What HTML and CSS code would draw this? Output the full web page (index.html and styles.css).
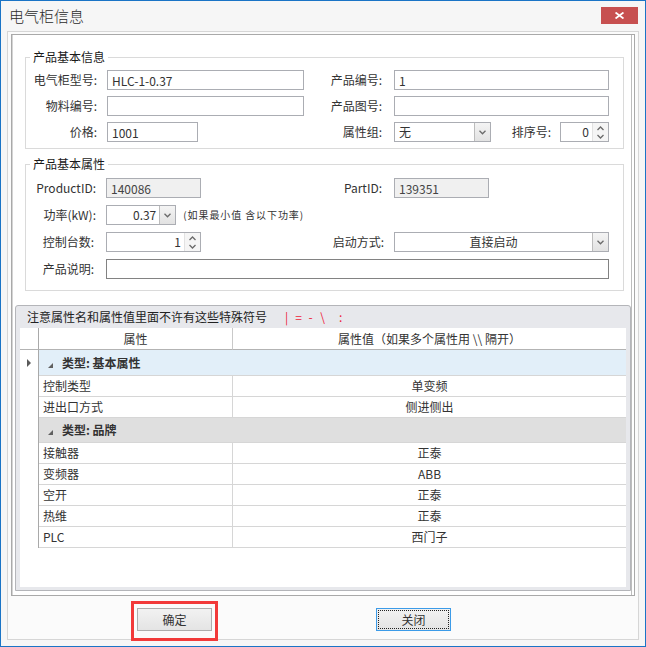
FILE: index.html
```html
<!DOCTYPE html>
<html lang="zh-CN">
<head>
    <meta charset="UTF-8">
    <title>电气柜信息</title>
    <link rel="stylesheet" href="styles.css">
</head>
<body>
    <div class="window">
        <div class="titlebar">
            <span class="title">电气柜信息</span>
            <button class="close" type="button" aria-label="关闭">
                <svg width="9" height="7" viewBox="0 0 9 7"><path d="M0.5 0.5 L8.5 6.5 M8.5 0.5 L0.5 6.5" stroke="#fff" stroke-width="1.8" fill="none"/></svg>
            </button>
        </div>

        <div class="frame">
            <div class="panel">
                <fieldset class="group">
                    <legend>产品基本信息</legend>
                    <div class="form-grid">
                        <label>电气柜型号:</label>
                        <input class="field" type="text" value="HLC-1-0.37">
                        <label>产品编号:</label>
                        <input class="field" type="text" value="1">

                        <label>物料编号:</label>
                        <input class="field" type="text">
                        <label>产品图号:</label>
                        <input class="field" type="text">

                        <label>价格:</label>
                        <input class="field price" type="text" value="1001">
                        <label>属性组:</label>
                        <div class="pair">
                            <div class="combo group-combo">
                                <span class="combo-text">无</span>
                                <span class="drop"><svg width="7" height="5" viewBox="0 0 7 5"><path d="M0.5 0.8 L3.5 3.8 L6.5 0.8" stroke="#6a6a6a" stroke-width="1.3" fill="none"/></svg></span>
                            </div>
                            <label class="inline">排序号:</label>
                            <div class="spin sort-spin">
                                <span class="spin-text">0</span>
                                <span class="spin-btns">
                                    <svg width="7" height="5" viewBox="0 0 7 5"><path d="M0.5 4 L3.5 1 L6.5 4" stroke="#6a6a6a" stroke-width="1.3" fill="none"/></svg>
                                    <svg width="7" height="5" viewBox="0 0 7 5"><path d="M0.5 1 L3.5 4 L6.5 1" stroke="#6a6a6a" stroke-width="1.3" fill="none"/></svg>
                                </span>
                            </div>
                        </div>
                    </div>
                </fieldset>

                <fieldset class="group attrs">
                    <legend>产品基本属性</legend>
                    <div class="form-grid attrs-grid">
                        <label>ProductID:</label>
                        <input class="field id-field" type="text" value="140086" readonly>
                        <label>PartID:</label>
                        <input class="field id-field" type="text" value="139351" readonly>

                        <label>功率(kW):</label>
                        <div class="power">
                            <div class="combo small-combo">
                                <span class="combo-text right">0.37</span>
                                <span class="drop"><svg width="7" height="5" viewBox="0 0 7 5"><path d="M0.5 0.8 L3.5 3.8 L6.5 0.8" stroke="#6a6a6a" stroke-width="1.3" fill="none"/></svg></span>
                            </div>
                            <span class="note">(如果最小值 含以下功率)</span>
                        </div>
                        <span></span>
                        <span></span>

                        <label>控制台数:</label>
                        <div class="spin small-combo">
                            <span class="spin-text">1</span>
                            <span class="spin-btns">
                                <svg width="7" height="5" viewBox="0 0 7 5"><path d="M0.5 4 L3.5 1 L6.5 4" stroke="#6a6a6a" stroke-width="1.3" fill="none"/></svg>
                                <svg width="7" height="5" viewBox="0 0 7 5"><path d="M0.5 1 L3.5 4 L6.5 1" stroke="#6a6a6a" stroke-width="1.3" fill="none"/></svg>
                            </span>
                        </div>
                        <label>启动方式:</label>
                        <div class="combo">
                            <span class="combo-text center">直接启动</span>
                            <span class="drop"><svg width="7" height="5" viewBox="0 0 7 5"><path d="M0.5 0.8 L3.5 3.8 L6.5 0.8" stroke="#6a6a6a" stroke-width="1.3" fill="none"/></svg></span>
                        </div>

                        <label>产品说明:</label>
                        <input class="field desc" type="text">
                    </div>
                </fieldset>

                <div class="grid-panel">
                    <div class="caption">
                        注意属性名和属性值里面不许有这些特殊符号
                        <span class="warn"><span>|</span><span>=</span><span>-</span><span>\</span><span class="colon">:</span></span>
                    </div>
                    <div class="grid-body">
                        <table class="prop-grid">
                            <thead>
                                <tr>
                                    <th class="ind"></th>
                                    <th class="name-col">属性</th>
                                    <th class="value-col">属性值（如果多个属性用 \\ 隔开）</th>
                                </tr>
                            </thead>
                            <tbody>
                                <tr class="cat cat-basic">
                                    <td class="ind"><svg width="4" height="8" viewBox="0 0 4 8"><path d="M0 0 L4 4 L0 8 Z" fill="#5a5a5a"/></svg></td>
                                    <td colspan="2"><svg class="fold" width="5" height="5" viewBox="0 0 5 5"><path d="M5 0 L5 5 L0 5 Z" fill="#606060"/></svg>类型: 基本属性</td>
                                </tr>
                                <tr>
                                    <td class="ind"></td>
                                    <td class="name">控制类型</td>
                                    <td class="value">单变频</td>
                                </tr>
                                <tr>
                                    <td class="ind"></td>
                                    <td class="name">进出口方式</td>
                                    <td class="value">侧进侧出</td>
                                </tr>
                                <tr class="cat cat-brand">
                                    <td class="ind"></td>
                                    <td colspan="2"><svg class="fold" width="5" height="5" viewBox="0 0 5 5"><path d="M5 0 L5 5 L0 5 Z" fill="#606060"/></svg>类型: 品牌</td>
                                </tr>
                                <tr>
                                    <td class="ind"></td>
                                    <td class="name">接触器</td>
                                    <td class="value">正泰</td>
                                </tr>
                                <tr>
                                    <td class="ind"></td>
                                    <td class="name">变频器</td>
                                    <td class="value">ABB</td>
                                </tr>
                                <tr>
                                    <td class="ind"></td>
                                    <td class="name">空开</td>
                                    <td class="value">正泰</td>
                                </tr>
                                <tr>
                                    <td class="ind"></td>
                                    <td class="name">热维</td>
                                    <td class="value">正泰</td>
                                </tr>
                                <tr>
                                    <td class="ind"></td>
                                    <td class="name">PLC</td>
                                    <td class="value">西门子</td>
                                </tr>
                            </tbody>
                        </table>
                    </div>
                </div>
            </div>

            <div class="actions">
                <span class="marked"><button class="btn" type="button">确定</button></span>
                <button class="btn focused" type="button"><span>关闭</span></button>
            </div>
        </div>
    </div>
</body>
</html>
```

FILE: styles.css
```css
* {
    box-sizing: border-box;
    margin: 0;
    padding: 0;
}

body {
    font-family: "Noto Sans CJK SC", "Noto Sans", sans-serif;
    font-size: 12px;
    line-height: 18px;
    color: #333;
    background: #fff;
}

.window {
    width: 646px;
    height: 647px;
    border: 1px solid #1a74c6;
    background: #f6f6f6;
    overflow: hidden;
}

/* title bar */
.titlebar {
    height: 30px;
    display: flex;
    justify-content: space-between;
    align-items: flex-start;
    padding: 0 7px 0 8px;
}

.title {
    font-size: 15px;
    line-height: 30px;
    font-weight: 300;
    color: #2b2b2b;
}

.close {
    width: 37px;
    height: 17px;
    margin-top: 6px;
    border: none;
    background: #c75050;
    display: flex;
    align-items: center;
    justify-content: center;
}

/* outer frame + white panel */
.frame {
    height: 609px;
    margin: 0 6px;
    border: 1px solid #d6d6d6;
    background: #fbfbfb;
    padding: 2px 3px 0;
}

.panel {
    height: 562px;
    border: 1px solid #a9a9a9;
    background: #fff;
    box-shadow: inset 1px 0 0 #d4d4d4, inset -2px 0 0 #fff, inset -3px 0 0 #bdbdbd;
    overflow: hidden;
}

/* group boxes */
.group {
    border: 1px solid #dadada;
    margin: 15px 10px 0 13px;
    padding: 6px 14px 6px 0;
    min-width: 0;
}

.group legend {
    margin-left: 4px;
    padding: 0 3px;
    font-size: 12px;
    line-height: 14px;
    color: #1a1a1a;
}

.group.attrs {
    margin-top: 8px;
    padding: 7px 14px 11px 0;
}

.form-grid {
    display: grid;
    grid-template-columns: 81px 197px 90px 215px;
    grid-auto-rows: 20px;
    row-gap: 6px;
}

.attrs-grid {
    grid-template-columns: 80px 198px 90px 215px;
    row-gap: 7px;
}

.form-grid label {
    text-align: right;
    line-height: 20px;
    white-space: nowrap;
    color: #333;
    padding-right: 10px;
}

.form-grid label:nth-of-type(even) {
    padding-right: 12px;
}

.field {
    width: 100%;
    height: 20px;
    border: 1px solid #abadb3;
    padding: 0 4px;
    font: inherit;
    line-height: 18px;
    color: #333;
    background: #fff;
    outline: none;
}

.field.price {
    width: 91px;
}

.field.id-field {
    width: 95px;
    background: #f0f0f0;
    color: #444;
}

.field.desc {
    grid-column: 2 / span 3;
    border-color: #828282;
}

.pair {
    display: flex;
}

.pair .inline {
    flex: 1;
    padding-right: 9px;
}

/* combo boxes and spinners */
.combo,
.spin {
    display: flex;
    height: 20px;
    border: 1px solid #abadb3;
    background: #fff;
}

.combo-text,
.spin-text {
    flex: 1;
    padding: 0 4px;
    line-height: 18px;
    white-space: nowrap;
    overflow: hidden;
}

.combo-text.right,
.spin-text {
    text-align: right;
    padding-right: 3px;
}

.combo-text.center {
    text-align: center;
}

.drop {
    width: 16px;
    border-left: 1px solid #bcbcbc;
    background: linear-gradient(#f4f4f4, #e2e2e2);
    display: flex;
    align-items: center;
    justify-content: center;
}

.spin-btns {
    width: 16px;
    border-left: 1px solid #e2e2e2;
    background: #f5f5f5;
    display: flex;
    flex-direction: column;
    align-items: center;
    justify-content: space-around;
    padding: 1px 0;
}

.group-combo {
    width: 97px;
}

.sort-spin {
    width: 49px;
}

.small-combo {
    width: 95px;
}

.power {
    display: flex;
    align-items: center;
    gap: 7px;
    white-space: nowrap;
}

.note {
    font-size: 10px;
    line-height: 14px;
    letter-spacing: 0.9px;
    color: #333;
}

/* property grid */
.grid-panel {
    height: 286px;
    margin: 14px 3px 4px;
    border: 1px solid #b4b5b9;
    border-radius: 3px 3px 0 0;
    background: #e7e8ec;
    padding: 0 4px 3px;
}

.caption {
    height: 22px;
    line-height: 22px;
    padding-left: 7px;
    color: #222;
    white-space: nowrap;
}

.warn {
    margin-left: 11px;
}

.warn span {
    display: inline-block;
    width: 12px;
    text-align: center;
    color: #ee1c3a;
}

.warn .colon {
    margin-left: 6px;
}

.grid-body {
    height: 259px;
    background: #fff;
}

.prop-grid {
    width: 606px;
    table-layout: fixed;
    border-spacing: 0;
    font-size: 12px;
}

.prop-grid th,
.prop-grid td {
    padding: 0;
    line-height: 20px;
    white-space: nowrap;
    color: #333;
}

.prop-grid th {
    height: 22px;
    font-weight: normal;
    border-bottom: 1px solid #b3b3b3;
}

.prop-grid .ind {
    width: 19px;
    border-right: 1px solid #a9a9a9;
    background: #fff;
    text-align: center;
    vertical-align: middle;
}

.prop-grid th.name-col {
    width: 194px;
    border-right: 1px solid #c9c9c9;
}

.prop-grid th.value-col {
    width: 393px;
}

.prop-grid td {
    height: 21px;
}

.prop-grid td.name,
.prop-grid td.value {
    border-bottom: 1px solid #d6d6d6;
}

.prop-grid td.name {
    padding-left: 4px;
    border-right: 1px solid #d6d6d6;
}

.prop-grid td.value {
    text-align: center;
}

.prop-grid .ind svg {
    display: block;
    margin: 0 auto;
}

.cat td[colspan] {
    padding-left: 9px;
    font-weight: bold;
    border-bottom: 1px solid #d6d6d6;
}

.cat-basic td {
    height: 26px;
}

.cat-basic td[colspan] {
    background: #e2eff9;
}

.cat-brand td {
    height: 25px;
}

.cat-brand td[colspan] {
    background: #dfdfdf;
}

.fold {
    margin-right: 9px;
    vertical-align: 0;
}

/* dialog buttons */
.actions {
    display: flex;
    gap: 164px;
    padding: 12px 0 0 126px;
}

.btn {
    width: 75px;
    height: 23px;
    border: 1px solid #adadad;
    background: linear-gradient(#f2f2f2, #e4e4e4);
    font: inherit;
    line-height: 21px;
    color: #333;
}

.btn.focused {
    border-color: #3c9be8;
    padding: 1px;
}

.btn.focused span {
    display: block;
    height: 19px;
    line-height: 17px;
    border: 1px dotted #222;
}

.marked {
    position: relative;
    display: block;
}

.marked::after {
    content: "";
    box-sizing: border-box;
    position: absolute;
    left: -6px;
    top: -7px;
    width: 87px;
    height: 40px;
    border: 3px solid #f23a3a;
}
```
